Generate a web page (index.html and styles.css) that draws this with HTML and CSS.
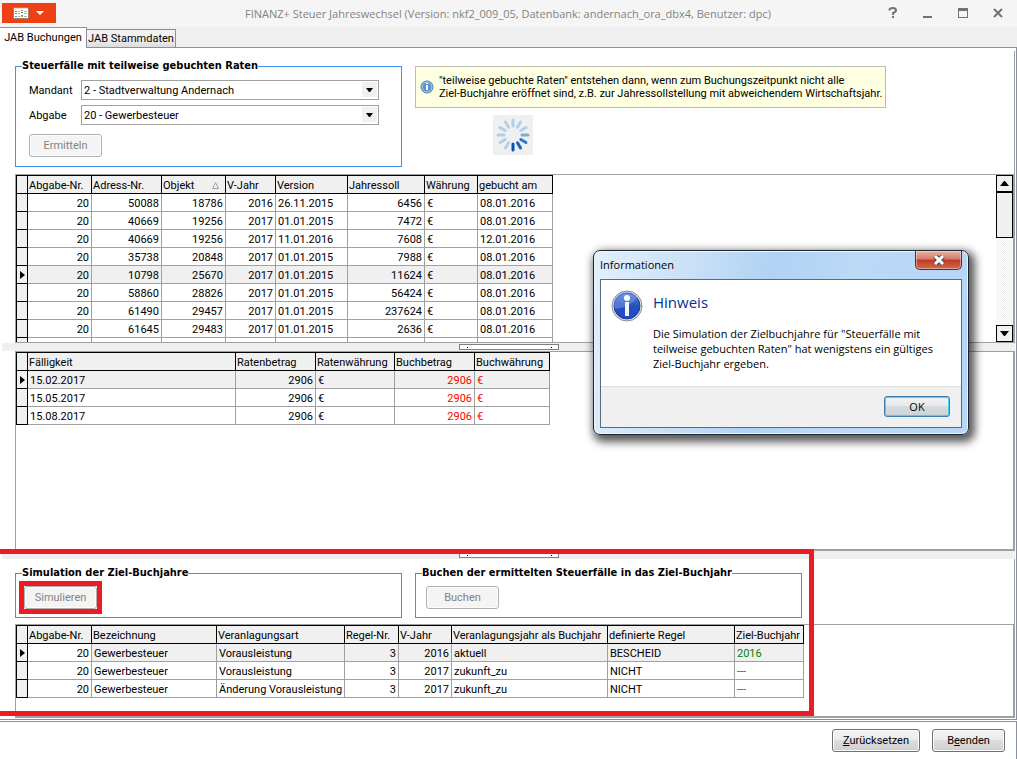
FILE: index.html
```html
<!DOCTYPE html>
<html lang="de">
<head>
  <meta charset="UTF-8" />
  <meta name="viewport" content="width=device-width, initial-scale=1.0"/>
  <title>FINANZ+ Steuer Jahreswechsel</title>
  <link rel="stylesheet" href="styles.css">
</head>
<body>

  <!-- Title bar -->
  <header class="titlebar">
    <button class="app-menu" aria-label="Menü">
      <svg width="54" height="20" viewBox="0 0 54 20">
        <rect x="11" y="4" width="16" height="12" fill="#a08070"/>
        <rect x="12" y="5" width="14" height="10" fill="#fff"/>
        <path d="M12 5h14v1H12z" fill="#ffd9b8"/>
        <g fill="#4d8fd0"><path d="M13 8h2v1h-2zM19 7h2v1h-2zM13 13h2v1h-2zM19 12h2v1h-2z"/></g>
        <g fill="#3fa050"><path d="M13 10h2v1h-2zM19 9h2v1h-2z"/></g>
        <g fill="#e08a30"><path d="M19 13h2v1h-2z"/></g>
        <g fill="#b0b0b0"><path d="M16 8h2v1h-2zM16 10h2v1h-2zM16 13h2v1h-2zM22 8h3v1h-3zM22 10h3v1h-3zM22 13h3v1h-3z"/></g>
        <path d="M34 8h8l-4 4z" fill="#fff"/>
      </svg>
    </button>
    <h1>FINANZ+ Steuer Jahreswechsel (Version: nkf2_009_05, Datenbank: andernach_ora_dbx4, Benutzer: dpc)</h1>
    <div class="window-buttons">
      <button aria-label="Hilfe"><svg width="10" height="12" viewBox="0 0 10 12"><path d="M1.500 3.500V2.500Q2 1 5 1T8 3.500Q8 5 5 6V8" fill="none" stroke="#737373" stroke-width="2"/><path d="M4 9h2v2H4z" fill="#737373"/></svg></button>
      <button aria-label="Minimieren"><svg width="10" height="12" viewBox="0 0 10 12"><path d="M0 9h9v2H0z" fill="#737373"/></svg></button>
      <button aria-label="Maximieren"><svg width="10" height="12" viewBox="0 0 10 12"><path d="M0 1h10v10H0zM1 4v6h8V4z" fill="#737373" fill-rule="evenodd"/></svg></button>
      <button aria-label="Schließen"><svg width="10" height="12" viewBox="0 0 10 12"><path d="M1 2l8 8M9 2l-8 8" stroke="#737373" stroke-width="2"/></svg></button>
    </div>
  </header>

  <nav class="tabs">
    <button class="tab active">JAB Buchungen</button>
    <button class="tab">JAB Stammdaten</button>
  </nav>

  <main class="page">
    <div class="content">

      <!-- Filter -->
      <div class="top">
        <fieldset class="group filter">
          <legend>Steuerfälle mit teilweise gebuchten Raten</legend>
          <div class="fields">
            <label for="mandant">Mandant</label>
            <span class="combo">
              <select id="mandant"><option>2 - Stadtverwaltung Andernach</option></select>
              <svg width="15" height="15" viewBox="0 0 15 15"><path d="M0 0h15v15H0z" fill="#f0f0f0"/><path d="M4 6h7L8 10H7z"/></svg>
            </span>
            <label for="abgabe">Abgabe</label>
            <span class="combo">
              <select id="abgabe"><option>20 - Gewerbesteuer</option></select>
              <svg width="15" height="15" viewBox="0 0 15 15"><path d="M0 0h15v15H0z" fill="#f0f0f0"/><path d="M4 6h7L8 10H7z"/></svg>
            </span>
          </div>
          <button class="btn" disabled>Ermitteln</button>
        </fieldset>

        <div class="side">
          <div class="hint">
            <svg width="14" height="14" viewBox="0 0 14 14">
              <circle cx="7" cy="7" r="6" fill="#5b93cf" stroke="#4a76ad"/>
              <circle cx="7" cy="7" r="5" fill="none" stroke="#b5d0ec"/>
              <path d="M6 3h2v1H6zM6 5h2v5H6z" fill="#fff"/>
            </svg>
            <p>"teilweise gebuchte Raten" entstehen dann, wenn zum Buchungszeitpunkt nicht alle<br>Ziel-Buchjahre eröffnet sind, z.B. zur Jahressollstellung mit abweichendem Wirtschaftsjahr.</p>
          </div>
          <svg class="spinner" width="40" height="40" viewBox="-20 -20 40 40">
            <g stroke="#b4cfe8" stroke-width="3" stroke-linecap="round">
              <path d="M0-9V-15"/>
              <path d="M0-9V-15" transform="rotate(30)"/>
              <path d="M0-9V-15" transform="rotate(60)"/>
              <path d="M0-9V-15" transform="rotate(90)" stroke="#82a9d8"/>
              <path d="M0-9V-15" transform="rotate(120)" stroke="#2f78c4"/>
              <path d="M0-9V-15" transform="rotate(150)" stroke="#1a62b5"/>
              <path d="M0-9V-15" transform="rotate(180)" stroke="#0453ad"/>
              <path d="M0-9V-15" transform="rotate(210)"/>
              <path d="M0-9V-15" transform="rotate(240)"/>
              <path d="M0-9V-15" transform="rotate(270)"/>
              <path d="M0-9V-15" transform="rotate(300)"/>
              <path d="M0-9V-15" transform="rotate(330)"/>
            </g>
          </svg>
        </div>
      </div>

      <!-- Steuerfälle -->
      <section class="panel cases">
        <div class="panel-body">
          <table class="grid">
            <colgroup><col class="w-mark"><col class="w-64"><col class="w-70"><col class="w-64"><col class="w-50"><col class="w-72"><col class="w-77"><col class="w-53"><col class="w-75"></colgroup>
            <thead>
              <tr><th></th><th>Abgabe-Nr.</th><th>Adress-Nr.</th><th><span class="sorted">Objekt <svg width="7" height="7" viewBox="0 0 7 7"><path d="M3.500 .5L6.500 6.500H.5z" fill="none" stroke="#a0a0a0"/></svg></span></th><th>V-Jahr</th><th>Version</th><th>Jahressoll</th><th>Währung</th><th>gebucht am</th></tr>
            </thead>
            <tbody>
              <tr><td></td><td class="num">20</td><td class="num">50088</td><td class="num">18786</td><td class="num">2016</td><td>26.11.2015</td><td class="num">6456</td><td>€</td><td>08.01.2016</td></tr>
              <tr><td></td><td class="num">20</td><td class="num">40669</td><td class="num">19256</td><td class="num">2017</td><td>01.01.2015</td><td class="num">7472</td><td>€</td><td>08.01.2016</td></tr>
              <tr><td></td><td class="num">20</td><td class="num">40669</td><td class="num">19256</td><td class="num">2017</td><td>11.01.2016</td><td class="num">7608</td><td>€</td><td>12.01.2016</td></tr>
              <tr><td></td><td class="num">20</td><td class="num">35738</td><td class="num">20848</td><td class="num">2017</td><td>01.01.2015</td><td class="num">7988</td><td>€</td><td>08.01.2016</td></tr>
              <tr class="current"><td></td><td class="num">20</td><td class="num">10798</td><td class="num">25670</td><td class="num">2017</td><td>01.01.2015</td><td class="num">11624</td><td>€</td><td>08.01.2016</td></tr>
              <tr><td></td><td class="num">20</td><td class="num">58860</td><td class="num">28826</td><td class="num">2017</td><td>01.01.2015</td><td class="num">56424</td><td>€</td><td>08.01.2016</td></tr>
              <tr><td></td><td class="num">20</td><td class="num">61490</td><td class="num">29457</td><td class="num">2017</td><td>01.01.2015</td><td class="num">237624</td><td>€</td><td>08.01.2016</td></tr>
              <tr><td></td><td class="num">20</td><td class="num">61645</td><td class="num">29483</td><td class="num">2017</td><td>01.01.2015</td><td class="num">2636</td><td>€</td><td>08.01.2016</td></tr>
              <tr><td></td><td></td><td></td><td></td><td></td><td></td><td></td><td></td><td></td></tr>
            </tbody>
          </table>
        </div>
        <div class="scrollbar">
          <button aria-label="Nach oben"><svg width="9" height="5" viewBox="0 0 9 5"><path d="M4 0h1l4 5H0z"/></svg></button>
          <div class="thumb"></div>
          <button class="down" aria-label="Nach unten"><svg width="9" height="5" viewBox="0 0 9 5"><path d="M0 0h9L5 5H4z"/></svg></button>
        </div>
      </section>

      <div class="splitter"><span class="grip"></span></div>

      <!-- Raten -->
      <section class="panel rates">
        <div class="panel-body">
          <table class="grid">
            <colgroup><col class="w-mark"><col class="w-208"><col class="w-80"><col class="w-79"><col class="w-80"><col class="w-75"></colgroup>
            <thead>
              <tr><th></th><th>Fälligkeit</th><th>Ratenbetrag</th><th>Ratenwährung</th><th>Buchbetrag</th><th>Buchwährung</th></tr>
            </thead>
            <tbody>
              <tr class="current"><td></td><td>15.02.2017</td><td class="num">2906</td><td>€</td><td class="num red">2906</td><td class="red">€</td></tr>
              <tr><td></td><td>15.05.2017</td><td class="num">2906</td><td>€</td><td class="num red">2906</td><td class="red">€</td></tr>
              <tr><td></td><td>15.08.2017</td><td class="num">2906</td><td>€</td><td class="num red">2906</td><td class="red">€</td></tr>
            </tbody>
          </table>
        </div>
      </section>

      <!-- Simulation -->
      <section class="simulation">
        <div class="splitter"><span class="grip"></span></div>
        <div class="groups">
          <fieldset class="group">
            <legend>Simulation der Ziel-Buchjahre</legend>
            <span class="marked"><button class="btn" disabled>Simulieren</button></span>
          </fieldset>
          <fieldset class="group book">
            <legend>Buchen der ermittelten Steuerfälle in das Ziel-Buchjahr</legend>
            <button class="btn" disabled>Buchen</button>
          </fieldset>
        </div>
        <div class="panel results">
          <div class="panel-body">
            <table class="grid">
              <colgroup><col class="w-mark"><col class="w-64"><col class="w-125"><col class="w-128"><col class="w-54"><col class="w-53"><col class="w-156"><col class="w-127"><col class="w-69"></colgroup>
              <thead>
                <tr><th></th><th>Abgabe-Nr.</th><th>Bezeichnung</th><th>Veranlagungsart</th><th>Regel-Nr.</th><th>V-Jahr</th><th>Veranlagungsjahr als Buchjahr</th><th>definierte Regel</th><th>Ziel-Buchjahr</th></tr>
              </thead>
              <tbody>
                <tr class="current"><td></td><td class="num focus">20</td><td>Gewerbesteuer</td><td>Vorausleistung</td><td class="num">3</td><td class="num">2016</td><td>aktuell</td><td>BESCHEID</td><td class="green">2016</td></tr>
                <tr><td></td><td class="num">20</td><td>Gewerbesteuer</td><td>Vorausleistung</td><td class="num">3</td><td class="num">2017</td><td>zukunft_zu</td><td>NICHT</td><td class="red">---</td></tr>
                <tr><td></td><td class="num">20</td><td>Gewerbesteuer</td><td>Änderung Vorausleistung</td><td class="num">3</td><td class="num">2017</td><td>zukunft_zu</td><td>NICHT</td><td class="red">---</td></tr>
              </tbody>
            </table>
          </div>
        </div>
        <div class="frame"></div>
      </section>

    </div>
  </main>

  <footer class="footer">
    <button class="btn wide"><u>Z</u>urücksetzen</button>
    <button class="btn">B<u>e</u>enden</button>
  </footer>

  <!-- Message box -->
  <div class="dialog" role="dialog" aria-labelledby="dialogTitle">
    <div class="dialog-title">
      <span id="dialogTitle">Informationen</span>
      <button class="dialog-close" aria-label="Schließen">
        <svg width="12" height="10" viewBox="0 0 12 10"><path d="M2 1l8 8M10 1l-8 8" stroke="#5b4a50" stroke-width="5"/><path d="M2 1l8 8M10 1l-8 8" stroke="#fff" stroke-width="3"/></svg>
      </button>
    </div>
    <div class="dialog-body">
      <div class="dialog-message">
        <svg width="32" height="32" viewBox="0 0 32 32">
          <defs>
            <linearGradient id="ball" x1="0" y1="0" x2="0" y2="1">
              <stop offset="0" stop-color="#5b86e0"/><stop offset=".5" stop-color="#2450b8"/><stop offset="1" stop-color="#2247d0"/>
            </linearGradient>
          </defs>
          <circle cx="16" cy="16" r="15" fill="#e4e4e4" stroke="#8a8a8a"/>
          <circle cx="16" cy="16" r="13" fill="url(#ball)" stroke="#1c3a94"/>
          <path d="M4 19A12 12 0 0 1 26 8Q18 18 4 19z" fill="#7fa3ea" opacity=".45"/>
          <circle cx="16" cy="8" r="3" fill="#fff"/>
          <path d="M14 12h4v14h-4z" fill="#f4f4f4"/>
        </svg>
        <div>
          <h2>Hinweis</h2>
          <p>Die Simulation der Zielbuchjahre für "Steuerfälle mit<br>teilweise gebuchten Raten" hat wenigstens ein gültiges<br>Ziel-Buchjahr ergeben.</p>
        </div>
      </div>
      <div class="dialog-actions">
        <button class="ok">OK</button>
      </div>
    </div>
  </div>

</body>
</html>
```

FILE: styles.css
```css
* {
  margin: 0;
  padding: 0;
  box-sizing: border-box;
}

body {
  display: flex;
  flex-direction: column;
  min-height: 100vh;
  position: relative;
  background: #fff;
  color: #000;
  font-family: Tahoma, Roboto, sans-serif;
  font-size: 11px;
  line-height: 13px;
}

button, select {
  font: inherit;
  color: inherit;
}

svg {
  display: block;
  flex: none;
}

/* Title bar */
.titlebar {
  display: flex;
  align-items: center;
  height: 27px;
  padding: 0 14px 1px 2px;
  background: #f5f5f5;
}

.titlebar h1 {
  flex: 1;
  padding-left: 72px;
  text-align: center;
  font-family: "Segoe UI", "Open Sans", sans-serif;
  font-size: 11px;
  font-weight: normal;
  color: #838383;
}

.app-menu {
  border: none;
  background: #ee4014;
}

.window-buttons {
  display: flex;
  gap: 25px;
}

.window-buttons button {
  border: none;
  background: none;
}

/* Tabs */
.tabs {
  display: flex;
  align-items: flex-end;
  height: 20px;
  background: #efefef;
}

.tab {
  height: 18px;
  width: 89px;
  border: 1px solid #8c8e9c;
  border-width: 1px 1px 0 0;
  background: linear-gradient(#f2f2f2 50%, #dcdcdc);
  white-space: nowrap;
}

.tab.active {
  height: 21px;
  width: 87px;
  margin-bottom: -1px;
  padding-bottom: 2px;
  position: relative;
  background: #fff;
}

.page {
  flex: 1;
  display: flex;
  padding: 3px 1px 1px 0;
  border: 1px solid #8c8e9c;
  border-left: none;
}

.content {
  flex: 1;
  display: flex;
  flex-direction: column;
  min-width: 0;
}

/* Filter */
.top {
  display: flex;
  align-items: flex-start;
  gap: 13px;
  padding: 8px 15px 7px;
  border-right: 1px solid #a0a0a0;
}

.group {
  flex: 0 1 387px;
  min-width: 0;
  padding: 6px 8px 8px;
  border: 1px solid #3c96f0;
}

.group legend {
  margin-left: -2px;
  font-family: Tahoma, "DejaVu Sans Condensed", sans-serif;
  line-height: 14px;
  font-weight: bold;
}

.group.filter {
  padding: 7px 22px 9px 13px;
}

.group.filter legend {
  margin-left: -7px;
}

.group.book {
  padding-left: 10px;
}

.group.book legend {
  margin-left: -4px;
}

.fields {
  display: grid;
  grid-template-columns: 52px 1fr;
  row-gap: 5px;
  align-items: center;
  margin-bottom: 9px;
}

.combo {
  display: block;
  position: relative;
}

.combo select {
  appearance: none;
  display: block;
  width: 100%;
  height: 20px;
  padding: 0 18px 0 2px;
  border: 1px solid #a0a0a0;
  border-radius: 0;
  background: #fff;
}

.combo svg {
  position: absolute;
  top: 2px;
  right: 2px;
  pointer-events: none;
}

.btn {
  display: block;
  width: 73px;
  height: 23px;
  border: 1px solid #707070;
  border-radius: 3px;
  background: linear-gradient(#f2f2f2, #ebebeb 50%, #ddd 50%, #cfcfcf);
  box-shadow: inset 0 0 0 1px #fcfcfc;
}

.btn:disabled {
  border-color: #adb2b5;
  background: #f4f4f4;
  color: #838383;
}

.btn.wide {
  width: 88px;
}

.side {
  padding-top: 7px;
}

.hint {
  display: flex;
  align-items: center;
  gap: 5px;
  width: 471px;
  height: 42px;
  padding: 0 4px;
  border: 1px solid #bcbcb0;
  background: #ffffe1;
  white-space: nowrap;
}

.spinner {
  margin: 7px 0 0 78px;
  background: #f0f0f0;
}

/* Grids */
.panel {
  display: flex;
  margin-left: 15px;
  border: 1px solid #a0a0a0;
  border-right-width: 2px;
}

.panel-body {
  flex: 1;
  min-width: 0;
  overflow: hidden;
}

.cases {
  height: 169px;
}

.rates {
  flex: 1;
  min-height: 90px;
  border-bottom-width: 2px;
}

.results {
  height: 94px;
  border-bottom-width: 2px;
}

.grid {
  table-layout: fixed;
  width: 0;
  border-collapse: separate;
  border-spacing: 0;
}

.grid th, .grid td {
  height: 18px;
  padding: 1px 2px 0;
  border: 1px solid #a0a0a0;
  border-width: 0 1px 1px 0;
  text-align: left;
  font-weight: normal;
  white-space: nowrap;
}

.grid th {
  height: 19px;
  padding: 1px 1px 0;
  border-top-width: 1px;
  border-color: #000;
  background: #f0f0f0;
}

.grid th:first-child, .grid td:first-child {
  padding: 0 3px;
  border-left-width: 1px;
  border-color: #000;
  background: #f0f0f0;
}

.grid .current td {
  background: #f0f0f0;
}

.grid .current td.focus {
  background: #fff;
}

.grid .current td:first-child::before {
  content: "";
  display: block;
  width: 5px;
  border: 4px solid transparent;
  border-left: 5px solid #000;
  border-right: none;
}

.grid .num {
  text-align: right;
}

.grid .red {
  color: #f00;
}

.grid .green {
  color: #008000;
}

.sorted {
  display: flex;
  align-items: center;
  justify-content: space-between;
  padding-right: 5px;
}

.w-mark { width: 12px; }
.w-50 { width: 50px; }
.w-53 { width: 53px; }
.w-54 { width: 54px; }
.w-64 { width: 64px; }
.w-69 { width: 69px; }
.w-70 { width: 70px; }
.w-72 { width: 72px; }
.w-75 { width: 75px; }
.w-77 { width: 77px; }
.w-79 { width: 79px; }
.w-80 { width: 80px; }
.w-125 { width: 125px; }
.w-127 { width: 127px; }
.w-128 { width: 128px; }
.w-156 { width: 156px; }
.w-208 { width: 208px; }

/* Scrollbar */
.scrollbar {
  display: flex;
  flex-direction: column;
  width: 17px;
  background: repeating-conic-gradient(#f0f0f0 0 25%, #fff 0 50%) 0 0 / 2px 2px;
}

.scrollbar button {
  display: flex;
  align-items: center;
  justify-content: center;
  height: 17px;
  border: 1px solid #000;
  background: #f0f0f0;
}

.scrollbar .down {
  margin-top: auto;
}

.thumb {
  height: 46px;
  border: 1px solid #000;
  background: #f0f0f0;
}

.splitter {
  display: flex;
  justify-content: center;
  align-items: center;
  height: 8px;
  margin-left: 2px;
  background: #efefef;
}

.grip {
  width: 100px;
  height: 6px;
  border: 1px solid #808080;
  background:
    linear-gradient(#000, #000) 7px 2px / 1px 1px no-repeat,
    linear-gradient(#000, #000) 91px 2px / 1px 1px no-repeat,
    #fff;
}

/* Simulation */
.simulation {
  position: relative;
}

.groups {
  display: flex;
  gap: 13px;
  padding: 7px 15px 6px;
  border-right: 1px solid #a0a0a0;
}

.frame {
  position: absolute;
  top: -2px;
  left: 0;
  bottom: 2px;
  width: 814px;
  border: 5px solid #ed1c24;
  border-left: none;
  pointer-events: none;
}

.marked {
  display: inline-block;
  position: relative;
}

.marked::after {
  content: "";
  position: absolute;
  inset: -5px;
  border: 5px solid #ed1c24;
}

/* Footer */
.footer {
  display: flex;
  justify-content: flex-end;
  gap: 12px;
  height: 38px;
  margin-top: 1px;
  padding: 7px 11px 0 0;
  border: 1px solid #8c8e9c;
  border-width: 1px 1px 0 0;
}

/* Message box */
.dialog {
  position: absolute;
  top: 250px;
  left: 593px;
  width: 376px;
  height: 185px;
  display: flex;
  flex-direction: column;
  padding: 0 6px 6px;
  border: 1px solid #20262e;
  border-radius: 7px;
  background: linear-gradient(100deg, #e3effb, #c9e0f7 25%, #b0d2f3 45%, #bcd9f6 65%, #b5d6f6);
  box-shadow: inset 0 0 0 1px #e8f4ff, 3px 4px 9px 3px rgba(0, 0, 0, 0.65);
  font-family: "Segoe UI", "Open Sans", sans-serif;
  font-size: 11px;
  line-height: 15px;
}

.dialog-title {
  flex: none;
  display: flex;
  justify-content: space-between;
  height: 28px;
}

.dialog-title span {
  padding-top: 6px;
}

.dialog-close {
  display: flex;
  align-items: center;
  justify-content: center;
  width: 47px;
  height: 19px;
  border: 1px solid #5c2b2b;
  border-top: none;
  border-radius: 0 0 5px 5px;
  background: linear-gradient(#e8b0a4, #d4796a 45%, #bf3a22 50%, #d2694f);
  box-shadow: inset 0 0 0 1px rgba(255, 255, 255, 0.4);
}

.dialog-body {
  flex: 1;
  display: flex;
  flex-direction: column;
  border: 1px solid #5a6b7e;
  background: #fff;
}

.dialog-message {
  flex: 1;
  display: flex;
  gap: 10px;
  padding: 10px;
}

.dialog-message h2 {
  margin: 2px 0 14px;
  font-size: 15px;
  line-height: 20px;
  font-weight: normal;
  color: #039;
}

.dialog-actions {
  display: flex;
  justify-content: flex-end;
  height: 41px;
  padding: 9px 11px;
  border-top: 1px solid #dfdfdf;
  background: #f0f0f0;
}

.ok {
  width: 66px;
  height: 21px;
  border: 1px solid #3c7fb1;
  border-radius: 3px;
  background: linear-gradient(#f2f2f2, #e6eaec 50%, #d5dbdf 50%, #ccd3d7);
  box-shadow: inset 0 0 0 1px #45d2f5;
}
```
